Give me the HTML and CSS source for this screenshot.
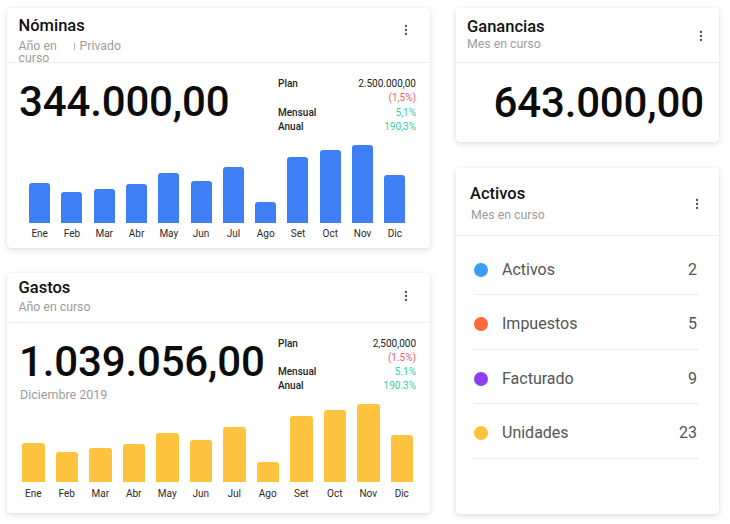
FILE: index.html
```html
<!DOCTYPE html>
<html lang="es">
<head>
<meta charset="utf-8">
<title>Panel</title>
<link rel="stylesheet" href="styles.css">
</head>
<body>
<div class="page">
  <div class="col col-left">
    <section class="card card-chart">
      <header class="card-head head-nominas">
        <div class="head-text">
          <h2 class="title">Nóminas</h2>
          <div class="subtitle subtitle-split"><span class="sub-main">Año en curso</span><span class="sub-sep"></span><span class="sub-extra">Privado</span></div>
        </div>
        <svg class="menu menu-nominas" width="4" height="12" viewBox="0 0 4 12"><circle cx="2" cy="2" r="1.15"/><circle cx="2" cy="6" r="1.15"/><circle cx="2" cy="10" r="1.15"/></svg>
      </header>
      <div class="card-body">
        <div class="kpi-row">
          <div class="kpi-main"><div class="big">344.000,00</div></div>
          <div class="stats">
            <span class="stat-label">Plan</span><span class="stat-val">2.500.000,00</span>
            <span class="stat-label"></span><span class="stat-val neg">(1,5%)</span>
            <span class="stat-label">Mensual</span><span class="stat-val pos">5,1%</span>
            <span class="stat-label">Anual</span><span class="stat-val pos">190,3%</span>
          </div>
        </div>
        <div class="chart chart-blue">
          <div class="bar-col"><div class="bar-area"><div class="bar" style="height:40px"></div></div><span class="bar-label">Ene</span></div>
          <div class="bar-col"><div class="bar-area"><div class="bar" style="height:31px"></div></div><span class="bar-label">Feb</span></div>
          <div class="bar-col"><div class="bar-area"><div class="bar" style="height:34px"></div></div><span class="bar-label">Mar</span></div>
          <div class="bar-col"><div class="bar-area"><div class="bar" style="height:39px"></div></div><span class="bar-label">Abr</span></div>
          <div class="bar-col"><div class="bar-area"><div class="bar" style="height:50px"></div></div><span class="bar-label">May</span></div>
          <div class="bar-col"><div class="bar-area"><div class="bar" style="height:42px"></div></div><span class="bar-label">Jun</span></div>
          <div class="bar-col"><div class="bar-area"><div class="bar" style="height:56px"></div></div><span class="bar-label">Jul</span></div>
          <div class="bar-col"><div class="bar-area"><div class="bar" style="height:21px"></div></div><span class="bar-label">Ago</span></div>
          <div class="bar-col"><div class="bar-area"><div class="bar" style="height:66px"></div></div><span class="bar-label">Set</span></div>
          <div class="bar-col"><div class="bar-area"><div class="bar" style="height:73px"></div></div><span class="bar-label">Oct</span></div>
          <div class="bar-col"><div class="bar-area"><div class="bar" style="height:78px"></div></div><span class="bar-label">Nov</span></div>
          <div class="bar-col"><div class="bar-area"><div class="bar" style="height:48px"></div></div><span class="bar-label">Dic</span></div>
        </div>
      </div>
    </section>

    <section class="card card-chart">
      <header class="card-head head-gastos">
        <div class="head-text">
          <h2 class="title">Gastos</h2>
          <div class="subtitle sub-gastos">Año en curso</div>
        </div>
        <svg class="menu menu-gastos" width="4" height="12" viewBox="0 0 4 12"><circle cx="2" cy="2" r="1.15"/><circle cx="2" cy="6" r="1.15"/><circle cx="2" cy="10" r="1.15"/></svg>
      </header>
      <div class="card-body">
        <div class="kpi-row">
          <div class="kpi-main">
            <div class="big">1.039.056,00</div>
            <div class="kpi-date">Diciembre 2019</div>
          </div>
          <div class="stats stats-gastos">
            <span class="stat-label">Plan</span><span class="stat-val">2,500,000</span>
            <span class="stat-label"></span><span class="stat-val neg">(1.5%)</span>
            <span class="stat-label">Mensual</span><span class="stat-val pos">5.1%</span>
            <span class="stat-label">Anual</span><span class="stat-val pos">190.3%</span>
          </div>
        </div>
        <div class="chart chart-yellow">
          <div class="bar-col"><div class="bar-area"><div class="bar" style="height:39px"></div></div><span class="bar-label">Ene</span></div>
          <div class="bar-col"><div class="bar-area"><div class="bar" style="height:30px"></div></div><span class="bar-label">Feb</span></div>
          <div class="bar-col"><div class="bar-area"><div class="bar" style="height:34px"></div></div><span class="bar-label">Mar</span></div>
          <div class="bar-col"><div class="bar-area"><div class="bar" style="height:38px"></div></div><span class="bar-label">Abr</span></div>
          <div class="bar-col"><div class="bar-area"><div class="bar" style="height:49px"></div></div><span class="bar-label">May</span></div>
          <div class="bar-col"><div class="bar-area"><div class="bar" style="height:42px"></div></div><span class="bar-label">Jun</span></div>
          <div class="bar-col"><div class="bar-area"><div class="bar" style="height:55px"></div></div><span class="bar-label">Jul</span></div>
          <div class="bar-col"><div class="bar-area"><div class="bar" style="height:20px"></div></div><span class="bar-label">Ago</span></div>
          <div class="bar-col"><div class="bar-area"><div class="bar" style="height:66px"></div></div><span class="bar-label">Set</span></div>
          <div class="bar-col"><div class="bar-area"><div class="bar" style="height:72px"></div></div><span class="bar-label">Oct</span></div>
          <div class="bar-col"><div class="bar-area"><div class="bar" style="height:78px"></div></div><span class="bar-label">Nov</span></div>
          <div class="bar-col"><div class="bar-area"><div class="bar" style="height:47px"></div></div><span class="bar-label">Dic</span></div>
        </div>
      </div>
    </section>
  </div>

  <div class="col col-right">
    <section class="card card-ganancias">
      <header class="card-head head-ganancias">
        <div class="head-text">
          <h2 class="title">Ganancias</h2>
          <div class="subtitle">Mes en curso</div>
        </div>
        <svg class="menu menu-ganancias" width="4" height="12" viewBox="0 0 4 12"><circle cx="2" cy="2" r="1.15"/><circle cx="2" cy="6" r="1.15"/><circle cx="2" cy="10" r="1.15"/></svg>
      </header>
      <div class="ganancias-body">
        <div class="big">643.000,00</div>
      </div>
    </section>

    <section class="card card-activos">
      <header class="card-head head-activos">
        <div class="head-text">
          <h2 class="title">Activos</h2>
          <div class="subtitle sub-activos">Mes en curso</div>
        </div>
        <svg class="menu menu-activos" width="4" height="12" viewBox="0 0 4 12"><circle cx="2" cy="2" r="1.15"/><circle cx="2" cy="6" r="1.15"/><circle cx="2" cy="10" r="1.15"/></svg>
      </header>
      <ul class="list">
        <li class="list-item"><span class="dot dot-blue"></span><span class="item-name">Activos</span><span class="item-val">2</span></li>
        <li class="list-item"><span class="dot dot-orange"></span><span class="item-name">Impuestos</span><span class="item-val">5</span></li>
        <li class="list-item"><span class="dot dot-purple"></span><span class="item-name">Facturado</span><span class="item-val">9</span></li>
        <li class="list-item"><span class="dot dot-yellow"></span><span class="item-name">Unidades</span><span class="item-val">23</span></li>
      </ul>
    </section>
  </div>
</div>
</body>
</html>
```

FILE: styles.css
```css
* { box-sizing: border-box; }

html, body {
  margin: 0;
  padding: 0;
  background: #ffffff;
}

body {
  font-family: Roboto, "Liberation Sans", Arial, sans-serif;
  color: #111;
  width: 730px;
  height: 524px;
  overflow: hidden;
}

.page {
  display: flex;
  gap: 26px;
  padding: 8px 0 0 7px;
}

.col {
  display: flex;
  flex-direction: column;
}

.col-left { width: 423px; gap: 25px; }
.col-right { width: 263px; gap: 26px; }

.card {
  background: #fff;
  border-radius: 4px;
  box-shadow: 0 2px 6px rgba(0, 0, 0, 0.13), 0 0 2px rgba(0, 0, 0, 0.07);
  display: flex;
  flex-direction: column;
}

.card-chart { height: 240px; }
.card-ganancias { height: 134px; }
.card-activos { height: 346px; }

/* header */
.card-head {
  display: flex;
  align-items: flex-start;
  border-bottom: 1px solid #ededed;
  flex: none;
}

.head-text { flex: 1; min-width: 0; }

.title {
  margin: 0;
  font-size: 16.5px;
  line-height: 20px;
  font-weight: 500;
  color: #111;
}

.subtitle {
  font-size: 12.3px;
  line-height: 14px;
  color: #9c9c9c;
}

.menu { fill: #4a4a4a; flex: none; }

.head-nominas { height: 55px; padding: 8px 11px 0 11.5px; }
.head-gastos { height: 50px; padding: 5px 11px 0 11.5px; }
.head-ganancias { height: 55px; padding: 9px 5px 0 11px; }
.head-activos { height: 68px; padding: 16px 10px 0 14px; }

.subtitle-split {
  display: flex;
  align-items: flex-start;
  line-height: 12px;
  margin-top: 4px;
  height: 12px;
}
.sub-main { width: 52px; flex: none; }
.sub-sep {
  width: 1px;
  height: 7px;
  background: #b8b8b8;
  margin: 3px 5px 0 3px;
  flex: none;
}
.sub-extra { flex: none; }

.sub-gastos { margin-top: 2px; }
.sub-activos { margin-top: 4px; padding-left: 1px; }

.menu-nominas { margin-top: 8px; margin-right: 11px; }
.menu-gastos { margin-top: 12px; margin-right: 11px; }
.menu-ganancias { margin-top: 13px; margin-right: 11px; }
.menu-activos { margin-top: 14px; margin-right: 10px; }

/* body */
.card-body {
  flex: 1;
  display: flex;
  flex-direction: column;
}

.kpi-row {
  display: flex;
  justify-content: space-between;
  align-items: flex-start;
  padding: 13.5px 14px 0 12px;
}

.big {
  font-size: 42px;
  line-height: 42px;
  font-weight: 500;
  color: #0c0c0c;
  letter-spacing: -0.15px;
  white-space: nowrap;
}

.kpi-main { padding-top: 4px; }

.kpi-date {
  margin-top: 4.5px;
  font-size: 12.5px;
  line-height: 15px;
  color: #9c9c9c;
  padding-left: 1px;
}

.stats {
  width: 138px;
  display: grid;
  grid-template-columns: 1fr auto;
  font-size: 10px;
  line-height: 14.5px;
}
.stats-gastos { line-height: 14px; }

.stat-label { font-weight: 500; color: #222; }
.stat-val { text-align: right; color: #222; }
.stat-val.neg { color: #e8606c; }
.stat-val.pos { color: #35d0ae; }

/* chart */
.chart {
  margin-top: auto;
  display: grid;
  grid-template-columns: repeat(12, 1fr);
}

.chart-blue { padding: 0 19px 7px 16.5px; }
.chart-yellow { padding: 0 11.5px 12px 9.5px; }

.bar-col {
  display: flex;
  flex-direction: column;
  align-items: center;
}

.bar-area {
  height: 80px;
  display: flex;
  align-items: flex-end;
}

.bar { border-radius: 3px 3px 0 0; }
.chart-blue .bar { width: 21px; background: #3f7ff6; }
.chart-yellow .bar { width: 22.5px; background: #fec43f; }

.bar-label {
  font-size: 10px;
  line-height: 14px;
  color: #2a2a2a;
}
.chart-blue .bar-label { margin-top: 4px; }
.chart-yellow .bar-label { margin-top: 5px; }

/* ganancias */
.ganancias-body {
  padding: 19px 15px 0 0;
  text-align: right;
}

/* activos list */
.list {
  list-style: none;
  margin: 0;
  padding: 4.5px 20px 0 18px;
}

.list-item {
  display: flex;
  align-items: center;
  padding: 21px 0 16.5px 0;
  line-height: 16px;
  font-size: 16px;
  color: #555;
  border-bottom: 1px solid #ededed;
}

.dot {
  width: 14px;
  height: 14px;
  border-radius: 50%;
  flex: none;
  margin-right: 14px;
}
.dot-blue { background: #3a9df8; }
.dot-orange { background: #ff6a38; }
.dot-purple { background: #8a3ff2; }
.dot-yellow { background: #fcc23c; }

.item-name { flex: 1; }
.item-val { padding-right: 2px; }
```
